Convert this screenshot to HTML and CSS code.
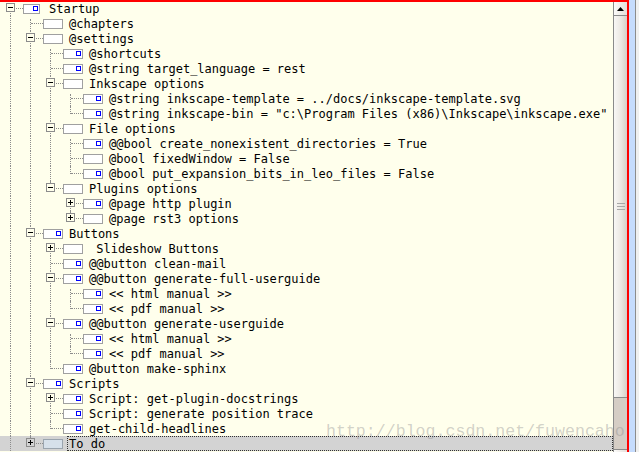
FILE: index.html
```html
<!DOCTYPE html>
<html>
<head>
<meta charset="utf-8">
<link rel="stylesheet" href="styles.css">
</head>
<body>
<div class="frame">
  <div class="pane">
    <div class="canvas">
      <div class="tree">
        <div class="row root"><i class="n r"><b class="tg"></b></i><span class="ic d"></span><span class="t">Startup</span></div>
        <div class="row"><i class="g v"></i><i class="n f"></i><span class="ic"></span><span class="t">@chapters</span></div>
        <div class="row"><i class="g v"></i><i class="n a"><b class="tg"></b></i><span class="ic"></span><span class="t">@settings</span></div>
        <div class="row"><i class="g v"></i><i class="g v"></i><i class="n f"></i><span class="ic d"></span><span class="t">@shortcuts</span></div>
        <div class="row"><i class="g v"></i><i class="g v"></i><i class="n a"></i><span class="ic d"></span><span class="t">@string target_language = rest</span></div>
        <div class="row"><i class="g v"></i><i class="g v"></i><i class="n a"><b class="tg"></b></i><span class="ic"></span><span class="t">Inkscape options</span></div>
        <div class="row"><i class="g v"></i><i class="g v"></i><i class="g v"></i><i class="n f"></i><span class="ic d"></span><span class="t">@string inkscape-template = ../docs/inkscape-template.svg</span></div>
        <div class="row"><i class="g v"></i><i class="g v"></i><i class="g v"></i><i class="n l"></i><span class="ic d"></span><span class="t">@string inkscape-bin = "c:\Program Files (x86)\Inkscape\inkscape.exe"</span></div>
        <div class="row"><i class="g v"></i><i class="g v"></i><i class="n a"><b class="tg"></b></i><span class="ic"></span><span class="t">File options</span></div>
        <div class="row"><i class="g v"></i><i class="g v"></i><i class="g v"></i><i class="n f"></i><span class="ic d"></span><span class="t">@@bool create_nonexistent_directories = True</span></div>
        <div class="row"><i class="g v"></i><i class="g v"></i><i class="g v"></i><i class="n a"></i><span class="ic"></span><span class="t">@bool fixedWindow = False</span></div>
        <div class="row"><i class="g v"></i><i class="g v"></i><i class="g v"></i><i class="n l"></i><span class="ic d"></span><span class="t">@bool put_expansion_bits_in_leo_files = False</span></div>
        <div class="row"><i class="g v"></i><i class="g v"></i><i class="n l"><b class="tg"></b></i><span class="ic"></span><span class="t">Plugins options</span></div>
        <div class="row"><i class="g v"></i><i class="g v"></i><i class="g"></i><i class="n f"><b class="tg p"></b></i><span class="ic d"></span><span class="t">@page http plugin</span></div>
        <div class="row"><i class="g v"></i><i class="g v"></i><i class="g"></i><i class="n l"><b class="tg p"></b></i><span class="ic"></span><span class="t">@page rst3 options</span></div>
        <div class="row"><i class="g v"></i><i class="n a"><b class="tg"></b></i><span class="ic d"></span><span class="t">Buttons</span></div>
        <div class="row"><i class="g v"></i><i class="g v"></i><i class="n f"><b class="tg p"></b></i><span class="ic"></span><span class="t"> Slideshow Buttons</span></div>
        <div class="row"><i class="g v"></i><i class="g v"></i><i class="n a"></i><span class="ic d"></span><span class="t">@@button clean-mail</span></div>
        <div class="row"><i class="g v"></i><i class="g v"></i><i class="n a"><b class="tg"></b></i><span class="ic d"></span><span class="t">@@button generate-full-userguide</span></div>
        <div class="row"><i class="g v"></i><i class="g v"></i><i class="g v"></i><i class="n f"></i><span class="ic d"></span><span class="t">&lt;&lt; html manual &gt;&gt;</span></div>
        <div class="row"><i class="g v"></i><i class="g v"></i><i class="g v"></i><i class="n l"></i><span class="ic d"></span><span class="t">&lt;&lt; pdf manual &gt;&gt;</span></div>
        <div class="row"><i class="g v"></i><i class="g v"></i><i class="n a"><b class="tg"></b></i><span class="ic d"></span><span class="t">@@button generate-userguide</span></div>
        <div class="row"><i class="g v"></i><i class="g v"></i><i class="g v"></i><i class="n f"></i><span class="ic d"></span><span class="t">&lt;&lt; html manual &gt;&gt;</span></div>
        <div class="row"><i class="g v"></i><i class="g v"></i><i class="g v"></i><i class="n l"></i><span class="ic d"></span><span class="t">&lt;&lt; pdf manual &gt;&gt;</span></div>
        <div class="row"><i class="g v"></i><i class="g v"></i><i class="n l"></i><span class="ic d"></span><span class="t">@button make-sphinx</span></div>
        <div class="row"><i class="g v"></i><i class="n a"><b class="tg"></b></i><span class="ic d"></span><span class="t">Scripts</span></div>
        <div class="row"><i class="g v"></i><i class="g v"></i><i class="n f"><b class="tg p"></b></i><span class="ic d"></span><span class="t">Script: get-plugin-docstrings</span></div>
        <div class="row"><i class="g v"></i><i class="g v"></i><i class="n a"></i><span class="ic d"></span><span class="t">Script: generate position trace</span></div>
        <div class="row"><i class="g v"></i><i class="g v"></i><i class="n l"></i><span class="ic d"></span><span class="t">get-child-headlines</span></div>
        <div class="row sel"><i class="g v"></i><i class="n l"><b class="tg p"></b></i><span class="ic"></span><span class="t">To do</span></div>
      </div>
    </div>
    <div class="sb">
      <div class="sb-btn"><svg width="7" height="4" viewBox="0 0 7 4"><path d="M0 4L3.5 0L7 4Z" fill="#000"/></svg></div>
      <div class="sb-thumb"><div class="grip"></div></div>
      <div class="sb-trough"></div>
      <div class="sb-btn down"></div>
    </div>
  </div>
  <div class="side"><div class="blue"></div><div class="gl"></div><div class="lt"></div></div>
</div>
<div class="wm">http://blog.csdn.net/fuwencaho</div>
</body>
</html>
```
FILE: styles.css
```css
*, *::before, *::after { box-sizing: border-box; }
html, body { margin: 0; padding: 0; }
body {
  width: 639px;
  height: 452px;
  overflow: hidden;
  background: #ffffec;
  font-family: "DejaVu Sans Mono", monospace;
  font-size: 12px;
  position: relative;
}
.frame { display: flex; height: 452px; }
.pane {
  width: 629px;
  flex: none;
  display: flex;
  border-top: 2px solid #ff0000;
  border-right: 2px solid #ff0000;
}
.canvas { width: 613px; flex: none; overflow: hidden; background: #ffffec; }
.tree { margin-top: -1px; }
.row { display: flex; height: 15px; align-items: flex-start; white-space: pre; }
.g, .n { flex: none; width: 20px; height: 15px; position: relative; font-style: normal; }
.g.v::after {
  content: ""; position: absolute; left: 10px; top: 0; bottom: 0;
  border-left: 1px dotted #8c8c8c;
}
.n::before {
  content: ""; position: absolute; left: 11px; top: 7px; width: 12px; height: 1px;
  border-top: 1px dotted #8c8c8c;
}
.n::after {
  content: ""; position: absolute; left: 10px; width: 1px;
  border-left: 1px dotted #8c8c8c;
}
.n.a::after { top: 0; bottom: 0; }
.n.l::after { top: 0; height: 8px; }
.n.f::after { top: 3px; bottom: 0; }
.n.r::after { top: 8px; bottom: 0; }
.tg {
  position: absolute; left: 6px; top: 2px; width: 9px; height: 9px;
  border: 1px solid #8c8c8c; background: #ffffec; z-index: 1;
}
.tg::before {
  content: ""; position: absolute; left: 1px; top: 3px; width: 5px; height: 1px; background: #000;
}
.tg.p::after {
  content: ""; position: absolute; left: 3px; top: 1px; width: 1px; height: 5px; background: #000;
}
.ic {
  flex: none; width: 20px; height: 10px; margin: 3px 0 0 3px;
  border: 1px solid #a0a0a0; background: #ffffff; position: relative;
}
.ic.d::after {
  content: ""; position: absolute; right: 1px; top: 1px; width: 5px; height: 5px;
  border: 1px solid #0000ff; background: #ffffff;
}
.t { margin-left: 6px; padding-top: 1px; line-height: 15px; height: 15px; color: #000; }
.root .ic { width: 17px; }
.root .t { margin-left: 9px; }
.sel { background: #d3d3d3; }
.sel .tg { background: #d3d3d3; }
.sel .ic { background: #d6e0ea; border-color: #9aa4ae; }
.sel .t {
  flex: 1; margin-left: 4px; padding-left: 2px;
  outline: 1px dotted #333; outline-offset: -1px;
}

.sb {
  width: 14px; flex: none; border-left: 1px solid #8a8a8a;
  display: flex; flex-direction: column; background: #d5cdc5; overflow: hidden;
}
.sb-btn {
  flex: none; height: 14px;
  background: linear-gradient(to right, #fcfbfa, #e4dfd9);
  border-bottom: 1px solid #8a8a8a;
  display: flex; align-items: center; justify-content: center;
}
.sb-btn.down { border-top: 1px solid #8a8a8a; border-bottom: none; }
.sb-thumb {
  flex: none; height: 382px;
  background: linear-gradient(to right, #f8f7f5, #ebe7e2 55%, #d6cfc7);
  border-bottom: 1px solid #8a8a8a;
  display: flex; align-items: center; justify-content: center;
}
.grip {
  width: 8px; height: 7px;
  background: repeating-linear-gradient(to bottom, #a8a8a8 0 1px, transparent 1px 3px);
}
.sb-trough { flex: none; height: 51px; }

.side { display: flex; width: 10px; flex: none; }
.blue { width: 6px; background: #c6dcfd; }
.gl { width: 1px; background: #8c8c8c; }
.lt { width: 3px; background: #f0f0f0; }

.wm {
  position: absolute; left: 326px; top: 423px;
  font-family: "Liberation Mono", monospace; font-size: 16.6px; line-height: 17px;
  color: rgba(140, 140, 140, 0.4);
  white-space: nowrap; pointer-events: none;
}
```
